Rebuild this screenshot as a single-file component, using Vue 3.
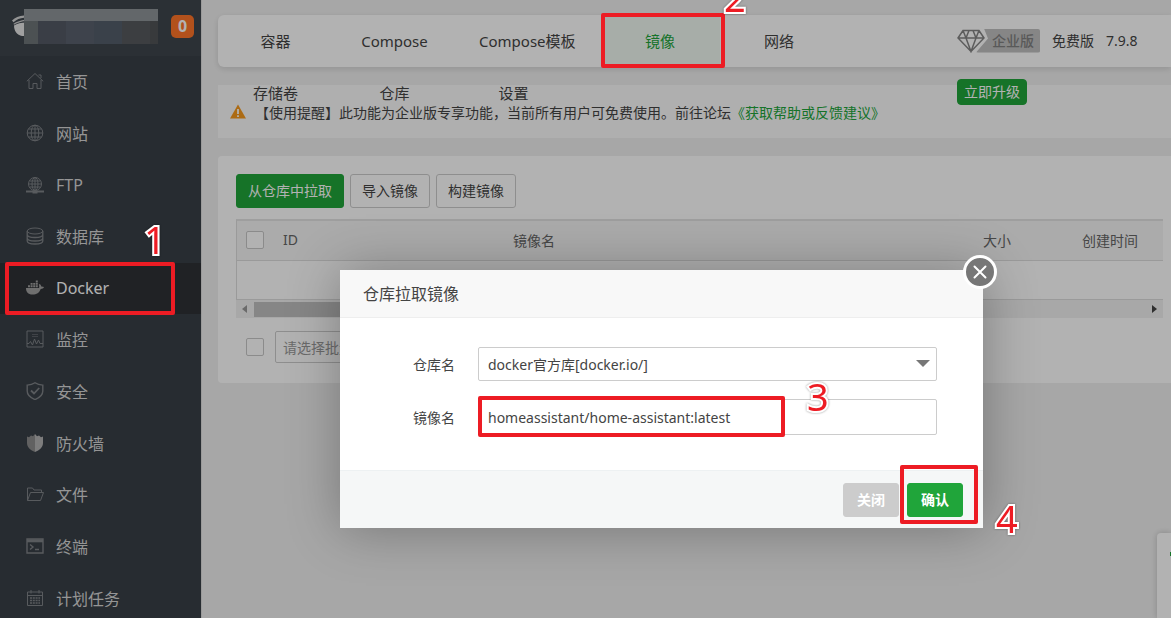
<template>
  <div class="panel">
    <aside class="sidebar">
      <div class="sidebar-header">
        <svg class="logo" viewBox="0 0 24 24" width="24" height="24">
          <path d="M0 6.500c3-3 7-4.500 12-5v2.200C8 4 4.500 5.500 1.500 8.200z" fill="#d4d4d4" />
          <path d="M1.500 9.800c3-2 7-3.500 12-4v1.200C9 7.500 5 9 2 10.800z" fill="#ccc" />
          <path d="M2 11.500c3-2 7-3 12-3V22h-4c-5-1-8-5-8-10.500z" fill="#e6e6e6" />
        </svg>
        <div class="account">
          <div class="account-top"></div>
          <div class="account-bottom">
            <span v-for="(c, i) in blocks" :key="i" :class="c"></span>
          </div>
        </div>
        <span class="msg-badge">0</span>
      </div>
      <nav class="menu">
        <a
          v-for="item in menus"
          :key="item.name"
          href="#"
          class="menu-item"
          :class="{ active: activeMenu === item.name }"
          @click.prevent="activeMenu = item.name"
        >
          <svg viewBox="0 0 18 18" width="18" height="18" fill="none" stroke="currentColor">
            <template v-if="item.icon === 'home'">
              <path d="M.8 9.300 9 1.500l8.200 7.800M3 8v8.500h4V11.500h4v5h4V8M12.500 3h2.500v3" />
            </template>
            <template v-else-if="item.icon === 'globe'">
              <circle cx="9" cy="9" r="7.800" />
              <ellipse cx="9" cy="9" rx="3.800" ry="7.800" />
              <path d="M9 1v16M1 9h16M2.500 5h13M2.500 13h13" />
            </template>
            <template v-else-if="item.icon === 'ftp'">
              <circle cx="9" cy="8" r="6.500" />
              <ellipse cx="9" cy="8" rx="3" ry="6.500" />
              <path d="M9 1.500v13M2.500 8h13M3.500 5h11M3.500 11h11" />
              <path d="M0 15.500h18" stroke-width="2" />
              <path d="M6.500 16h5" stroke-width="3" />
            </template>
            <template v-else-if="item.icon === 'database'">
              <ellipse cx="9" cy="4" rx="7.800" ry="3" />
              <path d="M1.200 4v10c0 1.700 3.500 3 7.800 3s7.800-1.300 7.800-3V4M1.200 7.500c0 1.700 3.500 3 7.800 3s7.800-1.300 7.800-3M1.200 11c0 1.700 3.500 3 7.800 3s7.800-1.300 7.800-3" stroke-width="1.300" />
            </template>
            <template v-else-if="item.icon === 'docker'">
              <path d="M0 9h13c.5-1 .3-2.300-.2-3.300l.9-.7c1 .7 1.400 1.500 1.500 2.500.9-.2 1.900 0 2.800.6-.6 1.400-1.700 1.900-3.300 1.900-1.400 3.800-4 5.500-8.200 5.500C2 15.500 0 13 0 9z" fill="currentColor" stroke="none" />
              <path d="M2 7.300h2M4.600 7.300h2M7.200 7.300h2M9.800 7.300h2M4.600 4.900h2M7.200 4.900h2M9.800 4.900h2M9.800 2.500h2" stroke-width="1.900" />
            </template>
            <template v-else-if="item.icon === 'monitor'">
              <path d="M1 1h16v16H1z" />
              <path d="M6 4.500h6M6 6.500h6" opacity=".5" />
              <path d="M1 13.500h2l1.500-2 2 3.500 2-6 2 5 2-4 1.500 3.500H17" />
            </template>
            <template v-else-if="item.icon === 'safe'">
              <path d="M9 .8c2.300 1.700 5 2.300 7.800 2.300V9c0 4-3.300 6.800-7.800 8.600C4.500 15.800 1.200 13 1.200 9V3.100C4 3.100 6.700 2.500 9 .8z" stroke-width="1.400" />
              <path d="m5 8.500 3 3L13.200 6" stroke-width="1.800" />
            </template>
            <template v-else-if="item.icon === 'firewall'">
              <path d="M9 0v18C4.500 16.500 1 13 1 9V2.500l2 .8 2-1.800 2 .8z" fill="#8c8c8c" stroke="none" />
              <path d="M9 0v18c4.500-1.500 8-5 8-9V2.500l-2 .8-2-1.800-2 .8z" fill="#b4b4b4" stroke="none" />
            </template>
            <template v-else-if="item.icon === 'folder'">
              <path d="M1.500 15.500V3h5l1.500 2h7.500v2.500M1.500 15.500 4.500 7.500h13l-3 8z" />
            </template>
            <template v-else-if="item.icon === 'terminal'">
              <path d="M1 2h16v14H1z" stroke-width="1.400" />
              <path d="M1 3.800h16" stroke-width="3" />
              <path d="m4 7.500 3 2.500-3 2.500M9 12.500h4" stroke-width="1.400" />
            </template>
            <template v-else>
              <path d="M1.500 3h15v13.500h-15zM1.500 6.500h15M5 1v3.500M13 1v3.500" />
              <path d="M4 9h10M4 11.500h10M4 14h10" stroke-dasharray="2 .8" stroke-width="1.500" />
            </template>
          </svg>
          <span>{{ item.name }}</span>
        </a>
      </nav>
    </aside>

    <main class="main">
      <header class="top-nav">
        <nav class="tabs">
          <a
            v-for="tab in tabs"
            :key="tab"
            href="#"
            class="tab"
            :class="{ active: activeTab === tab }"
            @click.prevent="activeTab = tab"
          >{{ tab }}</a>
        </nav>
        <div class="version">
          <div class="version-row">
            <span class="pro">
              <svg viewBox="0 0 28 24" width="28" height="24" fill="none" stroke="#858585" stroke-width="1.500">
                <path d="M6 1.500h16l5 7.500-13 13.500L1 9zM1 9h26M6 1.500 9 9l5 13.500L19 9l3-7.500M9 9l3-7.500M19 9l-3-7.500" />
              </svg>
              <span class="pro-tag">企业版</span>
            </span>
            <span>免费版</span>
            <span>7.9.8</span>
          </div>
          <div class="version-row">
            <button type="button" class="upgrade-btn">立即升级</button>
          </div>
        </div>
      </header>

      <div class="notice">
        <svg viewBox="0 0 16 15" width="16" height="15">
          <path d="M8 .5 16 14.500H0z" fill="#f79a1e" />
          <path d="M8 5v5M8 11.200v1.800" stroke="#fff" stroke-width="1.800" />
        </svg>
        <p>【使用提醒】此功能为企业版专享功能，当前所有用户可免费使用。前往论坛<a href="#">《获取帮助或反馈建议》</a></p>
      </div>

      <section class="card">
        <div class="toolbar">
          <button type="button" class="btn btn-success">从仓库中拉取</button>
          <button type="button" class="btn">导入镜像</button>
          <button type="button" class="btn">构建镜像</button>
        </div>
        <table class="image-table">
          <colgroup>
            <col class="col-check" />
            <col class="col-id" />
            <col />
            <col class="col-size" />
            <col class="col-time" />
          </colgroup>
          <thead>
            <tr>
              <th class="check-cell"><input type="checkbox" class="check" aria-label="全选" /></th>
              <th>ID</th>
              <th>镜像名</th>
              <th>大小</th>
              <th>创建时间</th>
            </tr>
          </thead>
          <tbody>
            <tr>
              <td colspan="5"></td>
            </tr>
          </tbody>
        </table>
        <div class="scrollbar">
          <span class="arrow-left"></span>
          <div class="track"><div class="thumb"></div></div>
          <span class="arrow-right"></span>
        </div>
        <div class="batch">
          <input type="checkbox" class="check" aria-label="全选" />
          <select class="batch-select" aria-label="批量操作">
            <option>请选择批量操作</option>
          </select>
        </div>
      </section>
    </main>

    <div class="side-tool"><i></i></div>

    <div class="mask"></div>
    <div class="dialog" role="dialog" aria-labelledby="dialog-title">
      <button type="button" class="dialog-close" aria-label="关闭弹窗">
        <svg viewBox="0 0 14 14" width="14" height="14" stroke="#fff" stroke-width="2" stroke-linecap="round">
          <path d="M1.500 1.500l11 11M12.500 1.500l-11 11" />
        </svg>
      </button>
      <h2 id="dialog-title" class="dialog-title">仓库拉取镜像</h2>
      <form id="pull-form" class="dialog-body" @submit.prevent>
        <div class="form-row">
          <label for="registry">仓库名</label>
          <div class="select-wrap">
            <select id="registry" class="form-control">
              <option>docker官方库[docker.io/]</option>
            </select>
            <svg viewBox="0 0 14 7" width="14" height="7"><path d="M0 0h14L7 7z" fill="#777" /></svg>
          </div>
        </div>
        <div class="form-row">
          <label for="image">镜像名</label>
          <input id="image" v-model="imageName" type="text" class="form-control image-input" />
        </div>
      </form>
      <div class="dialog-footer">
        <button type="button" class="btn btn-close">关闭</button>
        <button type="submit" form="pull-form" class="btn btn-success">确认</button>
      </div>
    </div>

    <div class="mark mark-menu"></div>
    <div class="mark mark-tab"></div>
    <div class="mark mark-input"></div>
    <div class="mark mark-confirm"></div>
    <span class="step step-1">1</span>
    <span class="step step-2">2</span>
    <span class="step step-3">3</span>
    <span class="step step-4">4</span>
  </div>
</template>

<script setup>
import { ref } from 'vue'

const menus = [
  { name: '首页', icon: 'home' },
  { name: '网站', icon: 'globe' },
  { name: 'FTP', icon: 'ftp' },
  { name: '数据库', icon: 'database' },
  { name: 'Docker', icon: 'docker' },
  { name: '监控', icon: 'monitor' },
  { name: '安全', icon: 'safe' },
  { name: '防火墙', icon: 'firewall' },
  { name: '文件', icon: 'folder' },
  { name: '终端', icon: 'terminal' },
  { name: '计划任务', icon: 'calendar' }
]

const tabs = ['容器', 'Compose', 'Compose模板', '镜像', '网络', '存储卷', '仓库', '设置']
const blocks = ['b1', 'b2', 'b3', 'b4', 'b5', 'b6']

const activeMenu = ref('Docker')
const activeTab = ref('镜像')
const imageName = ref('homeassistant/home-assistant:latest')
</script>

<style>
body {
  background: #f0f0f0;
}
</style>

<style scoped>
.panel {
  position: relative;
  display: flex;
  height: 100vh;
  overflow: hidden;
  background: #f0f0f0;
  color: #444;
  font-family: "Noto Sans", "Noto Sans CJK SC", sans-serif;
  font-size: 14px;
}

.panel *,
.panel *::before {
  box-sizing: border-box;
}

a {
  color: inherit;
  text-decoration: none;
}

button,
input,
select {
  font-family: inherit;
  font-size: 14px;
  color: inherit;
}

/* sidebar */
.sidebar {
  flex: none;
  width: 202px;
  background: #383f47;
  border-right: 1px solid #ddd;
}

.sidebar-header {
  display: flex;
  align-items: center;
  height: 56px;
  padding: 0 7px 4px 12px;
  background: #3e454d;
}

.logo {
  flex: none;
  margin-right: -12px;
}

.account {
  position: relative;
  flex: none;
  width: 134px;
}

.account-top {
  height: 12px;
  background: #8f9499;
}

.account-bottom {
  display: flex;
  height: 23px;
}

.account-bottom span {
  flex: 2;
}

.account-bottom .b1 {
  flex: 1;
  background: #6d7478;
}

.b2 {
  background: #535a65;
}

.b3 {
  background: #5a606d;
}

.b4 {
  background: #545d6a;
}

.b5 {
  background: #565a5e;
}

.account-bottom .b6 {
  flex: none;
  width: 8px;
  background: #515357;
}

.msg-badge {
  flex: none;
  width: 23px;
  margin-left: 13px;
  border-radius: 5px;
  background: #ff7429;
  color: #fff;
  font-size: 16px;
  font-weight: 700;
  line-height: 23px;
  text-align: center;
}

.menu {
  display: grid;
  grid-auto-rows: 1fr;
  height: calc(100vh - 50px);
}

.menu-item {
  display: flex;
  align-items: center;
  gap: 12px;
  padding: 0 0 1px 26px;
  color: #d6d6d6;
  font-size: 16px;
}

.menu-item svg {
  flex: none;
  color: #7f8387;
}

.menu-item.active {
  background: #2e3136;
  color: #fff;
}

.menu-item.active svg {
  color: #a0a0a0;
}

/* main */
.main {
  flex: 1;
  min-width: 0;
  padding: 15px 0 0 16px;
}

.top-nav {
  position: relative;
  z-index: 1;
  display: flex;
  height: 52px;
  border-radius: 6px 0 0 6px;
  background: #fff;
  box-shadow: 0 2px 6px rgba(0, 0, 0, 0.12);
  line-height: 52px;
}

.tabs {
  flex: 1;
  display: flex;
  flex-wrap: wrap;
  align-content: flex-start;
  margin-left: -2px;
}

.tab {
  min-width: 119px;
  padding: 0 25px;
  font-size: 15px;
  text-align: center;
}

.tab.active {
  background: #f0f8f1;
  color: #20a53a;
}

.version {
  flex: none;
  width: 214px;
}

.version-row {
  display: flex;
  align-items: center;
  gap: 12px;
  height: 51px;
}

.pro {
  display: flex;
  align-items: center;
}

.pro svg {
  position: relative;
}

.pro-tag {
  height: 24px;
  margin-left: -9px;
  padding: 0 6px 0 16px;
  border-radius: 2px;
  background: #c0c0c0;
  clip-path: polygon(8px 0, 100% 0, 100% 100%, 0 100%, 12px 10px);
  color: #808080;
  font-weight: 500;
  line-height: 23px;
}

.upgrade-btn {
  height: 26px;
  padding: 0 6px;
  border: 1px solid #20a53a;
  border-radius: 4px;
  background: #20a53a;
  color: #fff;
  line-height: 22px;
}

.notice {
  display: flex;
  align-items: center;
  gap: 9px;
  height: 53px;
  margin-top: 18px;
  padding-left: 12px;
  background: #fbfbfb;
}

.notice p {
  margin: 0;
  white-space: nowrap;
}

.notice a {
  color: #20a53a;
}

.card {
  margin-top: 18px;
  padding: 18px 8px 20px 18px;
  border-radius: 4px 0 0 4px;
  background: #fff;
}

.toolbar {
  display: flex;
  gap: 6px;
}

.btn {
  height: 34px;
  padding: 0 11px;
  border: 1px solid #ccc;
  border-radius: 3px;
  background: #fff;
  line-height: 30px;
}

.btn-success {
  border-color: #20a53a;
  background: #20a53a;
  color: #fff;
}

.image-table {
  width: 100%;
  margin-top: 11px;
  table-layout: fixed;
  border-collapse: separate;
  border-spacing: 0;
  border-top: 2px solid #e2e2e2;
  border-left: 1px solid #ddd;
}

.image-table th {
  height: 40px;
  padding: 0 8px 2px;
  border-bottom: 1px solid #ddd;
  background: #f5f5f5;
  color: #666;
  font-weight: 400;
  text-align: left;
}

.image-table th.check-cell {
  padding: 0 0 2px 9px;
}

.image-table td {
  height: 39px;
  padding: 0;
  border-bottom: 1px solid #ddd;
}

.col-check {
  width: 38px;
}

.col-id {
  width: 230px;
}

.col-size {
  width: 99px;
}

.col-time {
  width: 89px;
}

.check {
  appearance: none;
  display: block;
  width: 18px;
  height: 18px;
  margin: 0;
  border: 1px solid #c8c8c8;
  border-radius: 2px;
  background: #fff;
}

.scrollbar {
  display: flex;
  align-items: center;
  gap: 7px;
  height: 18px;
  padding: 0 6px;
  background: #f1f1f1;
}

.arrow-left,
.arrow-right {
  border: 4px solid transparent;
}

.arrow-left {
  border-left-width: 0;
  border-right: 5px solid #999;
}

.arrow-right {
  border-right-width: 0;
  border-left: 5px solid #444;
}

.track {
  flex: 1;
}

.thumb {
  width: 70%;
  height: 15px;
  background: #c1c1c1;
}

.batch {
  display: flex;
  align-items: center;
  gap: 11px;
  margin-top: 13px;
  padding-left: 10px;
}

.batch-select {
  appearance: none;
  width: 130px;
  height: 32px;
  padding: 0 7px;
  border: 1px solid #ccc;
  border-radius: 2px;
  background: #fff;
  color: #999;
}

.side-tool {
  position: absolute;
  right: 0;
  bottom: 0;
  width: 14px;
  height: 85px;
  padding-top: 19px;
  border-radius: 4px 0 0 0;
  background: #fff;
  box-shadow: 0 0 6px rgba(0, 0, 0, 0.2);
}

.side-tool i {
  display: block;
  width: 1px;
  height: 4px;
  margin-left: auto;
  background: #20a53a;
}

/* dialog */
.mask {
  position: absolute;
  inset: 0;
  z-index: 5;
  background: rgba(0, 0, 0, 0.3);
}

.dialog {
  position: absolute;
  top: 270px;
  left: 340px;
  z-index: 6;
  width: 643px;
  background: #fff;
  box-shadow: 1px 1px 50px rgba(0, 0, 0, 0.3);
}

.dialog-close {
  position: absolute;
  top: -15px;
  right: -14px;
  display: flex;
  align-items: center;
  justify-content: center;
  width: 34px;
  height: 34px;
  padding: 0;
  border: 3px solid #fff;
  border-radius: 50%;
  background: #777;
}

.dialog-title {
  height: 48px;
  margin: 0;
  padding-left: 23px;
  border-bottom: 1px solid #eee;
  background: #f8f8f8;
  font-size: 16px;
  font-weight: 400;
  line-height: 48px;
}

.dialog-body {
  display: flex;
  flex-direction: column;
  gap: 18px;
  padding: 29px 46px 35px 0;
}

.form-row {
  display: flex;
  align-items: center;
  gap: 23px;
}

.form-row label {
  flex: none;
  width: 115px;
  text-align: right;
}

.select-wrap {
  position: relative;
  flex: 1;
}

.select-wrap svg {
  position: absolute;
  top: 13px;
  right: 7px;
  pointer-events: none;
}

.form-control {
  appearance: none;
  display: block;
  width: 100%;
  height: 34px;
  padding: 0 9px;
  border: 1px solid #ccc;
  border-radius: 2px;
  outline: none;
  background: #fff;
}

.image-input {
  height: 36px;
}

.dialog-footer {
  display: flex;
  justify-content: flex-end;
  gap: 8px;
  padding: 12px 20px 11px;
  border-top: 1px solid #edf1f2;
  background: #f5f7f7;
}

.dialog-footer .btn {
  padding: 0 13px;
  font-weight: 700;
}

.dialog-footer .btn-close {
  border-color: #ccc;
  background: #ccc;
  color: #fff;
}

/* step marks */
.mark {
  position: absolute;
  z-index: 7;
  border: 4px solid #ed1c24;
  border-radius: 2px;
  pointer-events: none;
}

.mark-menu {
  top: 262px;
  left: 5px;
  width: 170px;
  height: 53px;
}

.mark-tab {
  top: 13px;
  left: 601px;
  width: 124px;
  height: 55px;
}

.mark-input {
  top: 396px;
  left: 478px;
  width: 307px;
  height: 41px;
}

.mark-confirm {
  top: 465px;
  left: 900px;
  width: 78px;
  height: 59px;
}

.step {
  position: absolute;
  z-index: 8;
  color: #ed1c24;
  font-size: 38px;
  line-height: 40px;
  -webkit-text-stroke: 4px #fff;
  paint-order: stroke fill;
  filter: drop-shadow(0 0 1px rgba(0, 0, 0, 0.4));
}

.step-1 {
  top: 219px;
  left: 144px;
}

.step-2 {
  top: -23px;
  left: 724px;
}

.step-3 {
  top: 376px;
  left: 807px;
}

.step-4 {
  top: 498px;
  left: 996px;
}
</style>
